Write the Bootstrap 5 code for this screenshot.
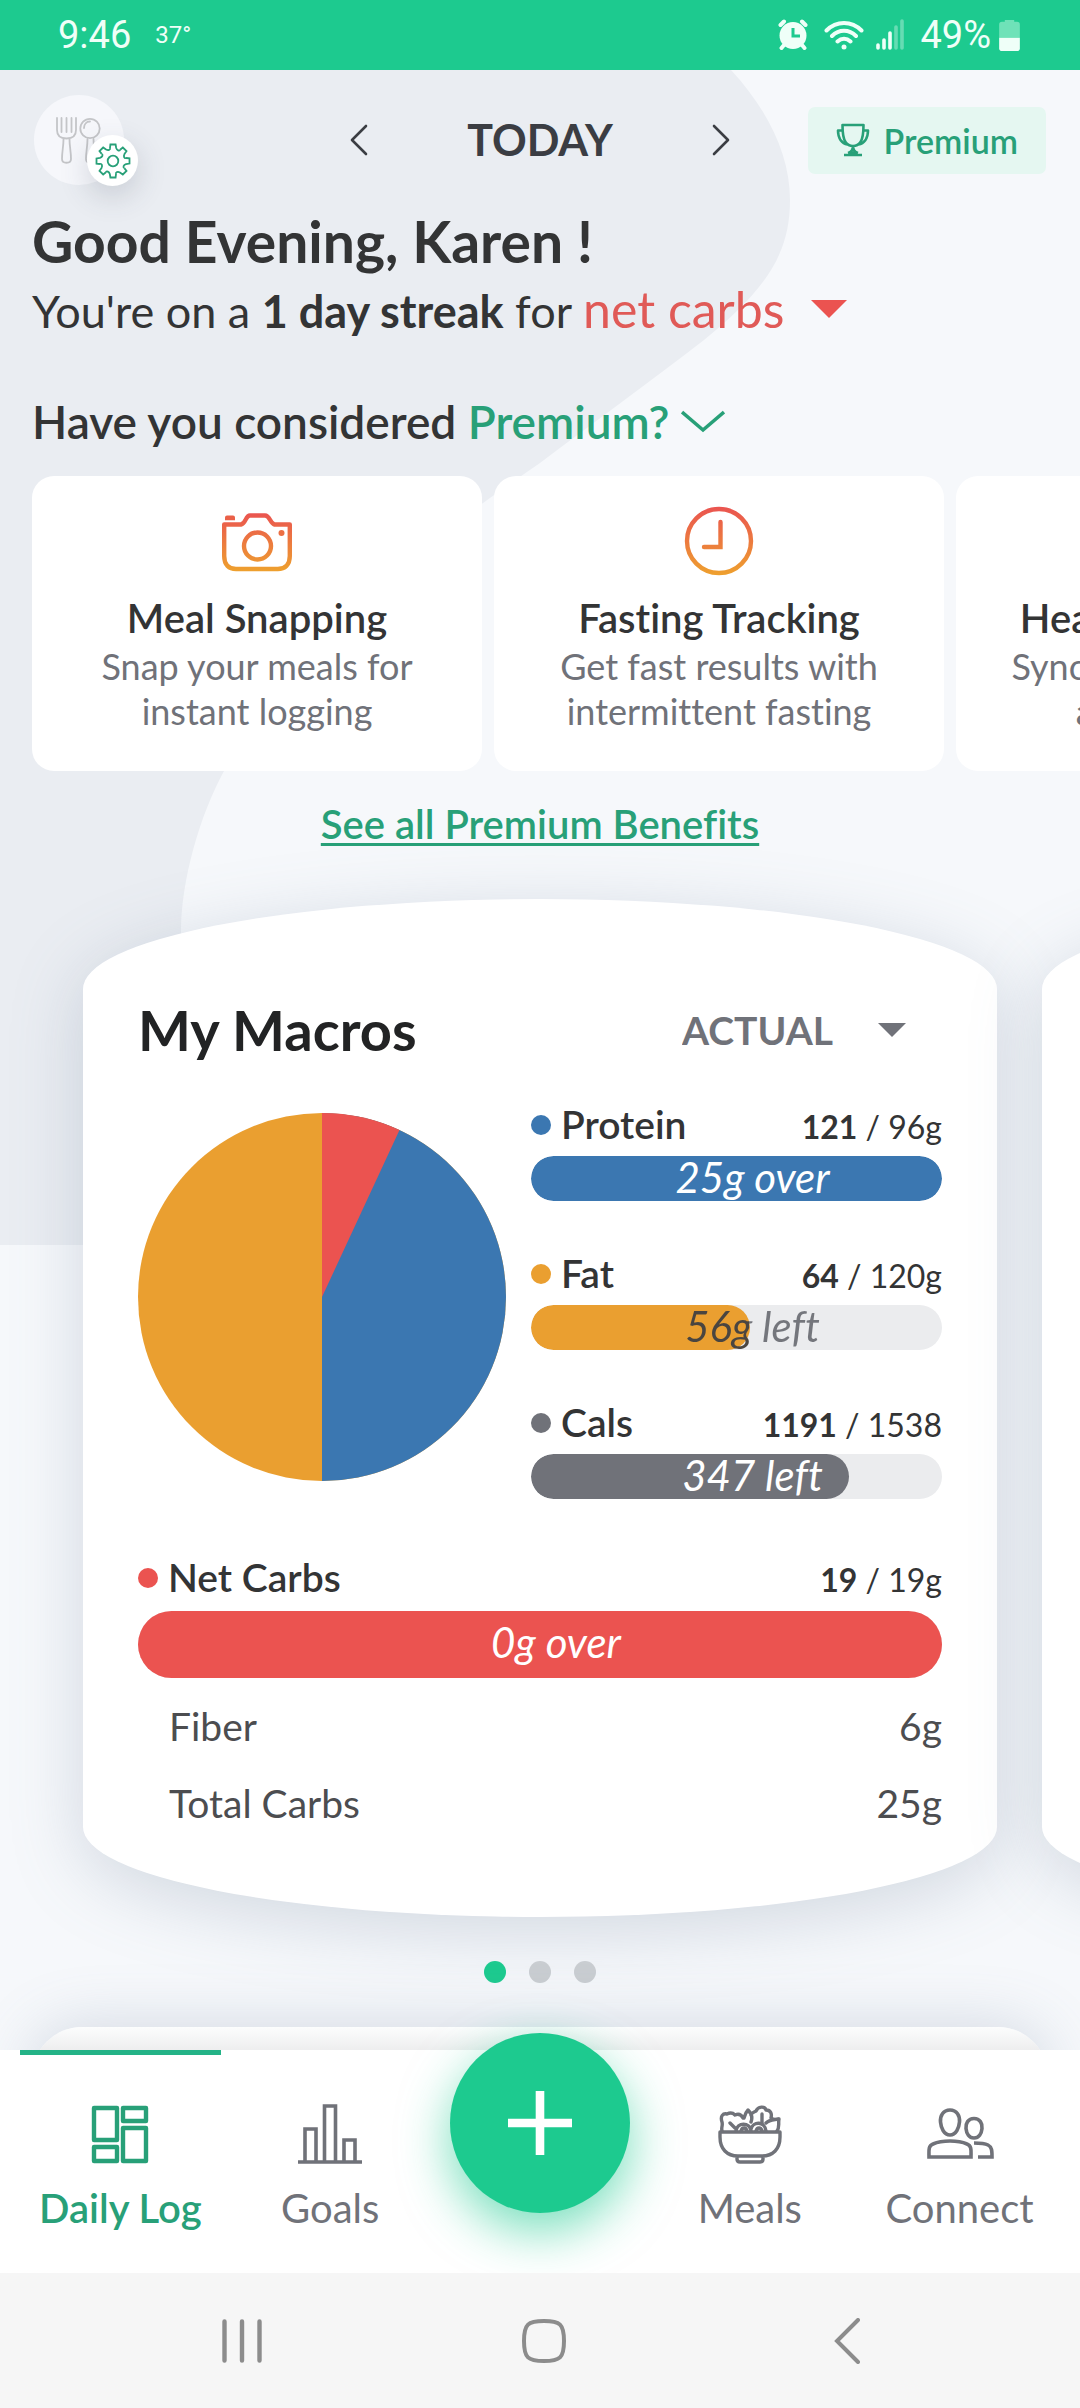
<!doctype html>
<html lang="en">
<head>
<meta charset="utf-8">
<meta name="viewport" content="width=device-width, initial-scale=1">
<title>Daily Log</title>
<link href="https://cdn.jsdelivr.net/npm/bootstrap@5.3.0/dist/css/bootstrap.min.css" rel="stylesheet">
<style>
  :root { --brand: #1dca8f; --brand-dark: #28a078; --ink: #333435; --grey: #707279; }
  body { font-family: Lato, "Open Sans", sans-serif; font-variant-ligatures: none; color: var(--ink); background: #f6f8fb; }
  svg { display: block; flex: none; }
  .text-brand { color: var(--brand-dark); }
  .text-grey { color: var(--grey); }
  .semi { font-weight: 600; }

  /* status bar */
  .status-bar { height: 70px; padding: 0 60px 0 58px; background: var(--brand); color: #effff8; font-family: Roboto, sans-serif; font-size: 38px; line-height: 70px; }
  .status-temp { font-size: 24px; }

  /* backdrop */
  .screen { overflow: hidden; }
  .backdrop { position: absolute; top: 0; left: 0; width: 100%; z-index: -1; }

  /* top row */
  .top-row { padding: 25px 34px 0; }
  .avatar-btn { width: 90px; height: 90px; background: #f6f7fb; border-radius: 50%; }
  .gear-badge { position: absolute; left: 53px; top: 40px; width: 51px; height: 51px; border-radius: 50%; background: #fff; box-shadow: 0 10px 30px rgba(60,70,90,.2); }
  .day-switch { width: 380px; font-size: 43px; line-height: 60px; color: #3b3d43; }
  .premium-btn { height: 67px; padding: 0 28px; gap: 14px; border-radius: 7px; background: #e5f7f1; color: var(--brand-dark); font-size: 34px; font-weight: 600; }

  /* greeting */
  .intro { padding: 24px 32px 0; }
  .hello { font-size: 57px; line-height: 64px; margin: 0 0 6px; font-weight: 700; }
  .streak { font-size: 45px; line-height: 60px; gap: 11px; margin: 0 0 53px; }
  .plain-select { appearance: none; border: 0; padding: 0; background: none; color: inherit; font: inherit; }
  .streak-pick { color: #e05a57; font-size: 50px; gap: 26px; }
  .consider { font-size: 46px; line-height: 56px; margin: 0 0 26px; font-weight: 600; gap: 12px; }

  /* benefits */
  .benefits { padding: 0 32px; gap: 12px; }
  .benefit { flex: 0 0 450px; border-radius: 22px; padding: 29px 10px 37px; text-align: center; background: #fff; font-size: 36px; line-height: 45px; color: var(--grey); white-space: nowrap; }
  .benefit svg { margin: 0 auto 17px; }
  .benefit h2 { font-size: 40px; line-height: 48px; font-weight: 600; color: var(--ink); margin: 0 0 2px; }
  .see-all { font-size: 40px; line-height: 48px; margin: 29px 0 51px; font-weight: 600; text-decoration-thickness: 3px; text-underline-offset: 4px; }
  .see-all:hover { color: var(--brand); }

  /* macro carousel */
  .carousel-track { padding: 0 83px; gap: 45px; }
  .macro-card { flex: 0 0 100%; background: #fff; border-radius: 50% / 90px; padding: 99px 55px 75px; box-shadow: 0 14px 70px rgba(105,125,150,.26); }
  .macro-card h2 { font-size: 56px; line-height: 64px; font-weight: 700; color: #222324; margin: 0; }
  .mode-pick { font-size: 39px; line-height: 48px; font-weight: 700; gap: 44px; padding-right: 36px; }
  .macro-split { margin-top: 41px; gap: 25px; }
  .pie { margin-top: 10px; }
  .macro-list { gap: 51px; }
  .macro-head { height: 44px; font-size: 39px; line-height: 44px; margin-bottom: 9px; }
  .macro-dot { width: 20px; height: 20px; border-radius: 50%; flex: none; margin-right: 10px; }
  .macro-value { font-size: 32px; }
  .meter { height: 45px; border-radius: 23px; background: #ebecee; position: relative; font-size: inherit; }
  .meter .progress-bar { border-radius: 23px; }
  .meter-text { position: absolute; inset: 0; padding-left: 32px; text-align: center; font-size: 42px; line-height: 42px; font-style: italic; color: #fff; }
  .meter-text-split { color: #6f7177; -webkit-text-fill-color: transparent; background: linear-gradient(90deg, #4a4540 53%, #74767c 53%); -webkit-background-clip: text; background-clip: text; }
  .net-block { margin-top: 57px; }
  .net-block .macro-head { margin-bottom: 11px; }
  .net-block .meter { height: 67px; border-radius: 34px; }
  .net-block .meter-text { line-height: 62px; }
  .detail-list { margin: 10px 0 0; padding-left: 31px; font-size: 39px; line-height: 77px; color: #4c4d50; }
  .pager { gap: 23px; margin: 44px 0; }
  .pager button { width: 22px; height: 22px; border-radius: 50%; border: 0; padding: 0; background: #c9cdd1; }
  .pager .active { background: var(--brand); }
  /* the following card slides under the bottom navigation */
  .next-card { margin: 0 32px -60px; min-height: 80px; border-radius: 50px 50px 0 0; background: linear-gradient(#fcfdfd, #ededee 24px); box-shadow: 0 0 60px rgba(105,125,150,.25); }

  /* bottom navigation */
  .tabs { background: #fff; padding: 0 20px; gap: 9px; position: relative; }
  .tab-item { flex: 1 1 0; border-top: 5px solid transparent; padding: 47px 0 41px; color: var(--grey); font-size: 40px; line-height: 48px; text-decoration: none; }
  .tab-item svg { margin: 0 auto 18px; }
  .tab-item.active { border-color: #24b387; color: var(--brand-dark); font-weight: 600; }
  .fab-slot { flex: 1 1 0; }
  .fab { width: 180px; height: 180px; border: 0; border-radius: 50%; background: var(--brand); margin-top: -17px; box-shadow: 0 18px 50px rgba(29,202,143,.6); }
  .system-nav { background: #f6f6f6; height: 135px; padding: 0 82px 0 91px; color: #8c8c8c; position: relative; }
  .system-nav .btn { flex: 1 1 0; color: inherit; }
</style>
</head>
<body class="d-flex flex-column min-vh-100">

<header class="status-bar d-flex justify-content-between">
  <div class="d-flex gap-4"><span>9:46</span><span class="status-temp">37°</span></div>
  <div class="d-flex align-items-center">
    <svg width="30" height="32" viewBox="0 0 30 32" aria-hidden="true"><g fill="none" stroke="#effff8" stroke-width="4" stroke-linecap="round"><path d="M2.500 6 6 2.500M27.500 6 24 2.500M6 26 3.500 29M24 26l2.500 3"/></g><circle cx="15" cy="16.500" r="13.500" fill="#effff8"/><path d="M15 9v8h7" fill="none" stroke="#1dca8f" stroke-width="3"/></svg>
    <svg class="ms-3" width="40" height="30" viewBox="0 0 40 30" fill="none" stroke="#effff8" stroke-width="4" stroke-linecap="round" aria-hidden="true"><path d="M2.500 10.500c10-10 25-10 35 0M8 16c7-7 17-7 24 0M13.500 21.500c4-3.600 9-3.600 13 0"/><circle cx="20" cy="27" r="2.500" fill="#effff8" stroke="none"/></svg>
    <svg class="ms-2 me-3" width="32" height="32" viewBox="0 0 32 32" aria-hidden="true"><g stroke="#effff8" stroke-width="3.600" stroke-linecap="round"><path d="M6 26v3M12 21v8M18 14v15"/><path d="M24 8v21M30 2v27" opacity=".35"/></g></svg>
    <span>49%</span>
    <svg class="ms-2" width="21" height="32" viewBox="0 0 22 34" aria-hidden="true"><path d="M6 3V1h10v2h3a3 3 0 0 1 3 3v14H0V6a3 3 0 0 1 3-3z" fill="#6fe2b8"/><path d="M0 20h22v11a3 3 0 0 1-3 3H3a3 3 0 0 1-3-3z" fill="#effff8"/></svg>
  </div>
</header>

<main class="screen flex-grow-1 d-flex flex-column position-relative z-0">
  <svg class="backdrop" viewBox="0 0 1080 1175" aria-hidden="true"><path fill="#eaedf2" d="M0 0H731C768 40 790 85 790 130 790 185 765 220 704 270 650 312 590 355 540 393 420 475 290 575 224 701 200 745 181 810 181 862V1175H0Z"/></svg>

  <div class="top-row d-flex align-items-center">
    <div class="flex-fill w-25">
      <button type="button" class="avatar-btn btn p-0 position-relative border-0" aria-label="Profile settings">
        <svg width="90" height="90" viewBox="0 0 90 90" fill="none" stroke="#c4c5c8" stroke-width="1.800" stroke-linecap="round" aria-hidden="true">
          <path d="M23 23v12c0 6 4 8.500 9.500 8.500S42 41 42 35V23M27.500 23v14M32.500 23v14M37.500 23v14M29.500 44c0 8-1.500 12-1.500 20 0 5 9 5 9 0 0-8-1.500-12-1.500-20"/>
          <circle cx="56" cy="33.500" r="9.700"/><path d="M50 33c0-4 2.500-6.500 6-6.500M53.500 44c0 8-1.500 12-1.500 20 0 5 9 5 9 0 0-8-1.500-12-1.500-20"/>
        </svg>
        <span class="gear-badge d-flex align-items-center justify-content-center">
          <svg width="36" height="36" viewBox="-18 -18 36 36" fill="none" stroke="#28a078" stroke-width="1.800" aria-hidden="true">
            <defs><path id="tooth" d="M-3-13-2.600-16.500H2.600L3.200-13C4-10.500 6.200-9.700 7.070-11.300"/></defs>
            <use href="#tooth"/><use href="#tooth" transform="rotate(45)"/><use href="#tooth" transform="rotate(90)"/><use href="#tooth" transform="rotate(135)"/><use href="#tooth" transform="rotate(180)"/><use href="#tooth" transform="rotate(225)"/><use href="#tooth" transform="rotate(270)"/><use href="#tooth" transform="rotate(315)"/>
            <circle r="5.300"/>
          </svg>
        </span>
      </button>
    </div>
    <div class="day-switch d-flex align-items-center justify-content-between fw-bold">
      <button type="button" class="btn border-0 p-0" aria-label="Previous day"><svg width="18" height="32" viewBox="0 0 18 32" fill="none" stroke="#3b3d43" stroke-width="2.600" stroke-linecap="round" stroke-linejoin="round"><path d="M16 2 2 16l14 14"/></svg></button>
      <span>TODAY</span>
      <button type="button" class="btn border-0 p-0" aria-label="Next day"><svg width="18" height="32" viewBox="0 0 18 32" fill="none" stroke="#3b3d43" stroke-width="2.600" stroke-linecap="round" stroke-linejoin="round"><path d="m2 2 14 14L2 30"/></svg></button>
    </div>
    <div class="flex-fill w-25 d-flex justify-content-end">
      <button type="button" class="premium-btn btn d-flex align-items-center border-0">
        <svg width="34" height="34" viewBox="0 0 34 34" fill="none" stroke="#28a078" stroke-width="2.600" stroke-linejoin="round" aria-hidden="true"><path d="M6.500 2h21c0 9-1 14-3 17-2 3-4.500 4-7.500 4s-5.500-1-7.500-4c-2-3-3-8-3-17zM6.500 7.500H2c0 8 4 13 9.500 14M27.500 7.500H32c0 8-4 13-9.500 14M17 23c0 4-2 6-5 7M17 23c0 4 2 6 5 7M8 32h18M12.500 29.500h9"/></svg>
        Premium
      </button>
    </div>
  </div>

  <section class="intro">
    <h1 class="hello">Good Evening, Karen !</h1>
    <div class="streak d-flex align-items-baseline">
      <label for="streakMacro">You're on a <strong>1 day streak</strong> for</label>
      <span class="streak-pick d-flex align-items-center">
        <select id="streakMacro" class="plain-select"><option>net carbs</option><option>protein</option><option>fat</option></select>
        <svg width="36" height="18" viewBox="0 0 36 18" aria-hidden="true"><path d="M0 0h36L18 18z" fill="#eb5350"/></svg>
      </span>
    </div>
    <p class="consider d-flex align-items-center">
      <span>Have you considered <a href="#benefits" class="text-decoration-none text-brand">Premium?</a></span>
      <svg width="44" height="24" viewBox="0 0 44 24" fill="none" stroke="#28a078" stroke-width="3.600" aria-hidden="true"><path d="m1 2 21 18L43 2"/></svg>
    </p>
  </section>

  <section id="benefits" class="benefits d-flex">
    <article class="benefit">
      <svg width="72" height="72" viewBox="0 0 72 72" fill="none" aria-hidden="true">
        <defs><linearGradient id="warmA" gradientUnits="userSpaceOnUse" x1="0" y1="8" x2="0" y2="66"><stop offset="0" stop-color="#ea5450"/><stop offset="1" stop-color="#eea02e"/></linearGradient></defs>
        <g stroke="url(#warmA)" stroke-width="4.400" stroke-linejoin="round"><path d="M3.200 19.500H20c5-1 4.500-9 9-9h15c5 0 5 8 9.500 9h15.300V51c0 9-5 13-12 13H15C8 64 3.200 60 3.200 51z"/><circle cx="36.500" cy="41" r="13.500"/></g>
        <path d="M4 12.500a2 2 0 0 1 2-2h6a2 2 0 0 1 2 2v2.700H4z" fill="#ea6048"/><circle cx="60.500" cy="28" r="3" fill="#ec6f44"/>
      </svg>
      <h2>Meal Snapping</h2>Snap your meals for<br>instant logging
    </article>
    <article class="benefit">
      <svg width="72" height="72" viewBox="0 0 72 72" fill="none" stroke="url(#warmB)" stroke-width="4.400" stroke-linecap="round" aria-hidden="true">
        <defs><linearGradient id="warmB" gradientUnits="userSpaceOnUse" x1="0" y1="2" x2="0" y2="70"><stop offset="0" stop-color="#ea5450"/><stop offset="1" stop-color="#eea02e"/></linearGradient></defs>
        <circle cx="36" cy="36" r="32"/><path d="M37.500 17v25H21"/>
      </svg>
      <h2>Fasting Tracking</h2>Get fast results with<br>intermittent fasting
    </article>
    <article class="benefit">
      <svg width="72" height="72" viewBox="0 0 72 72" fill="none" stroke="#ea5450" stroke-width="4.400" stroke-linejoin="round" aria-hidden="true"><path d="M36 62C-4 34 12 10 26 12c6 1 10 8 10 8s4-7 10-8c14-2 30 22-10 50z"/></svg>
      <h2>Health Integration</h2>Sync your health data<br>automatically
    </article>
  </section>

  <a href="#premium" class="see-all text-brand align-self-center">See all Premium Benefits</a>

  <section class="carousel-track d-flex">
    <article class="macro-card">
      <div class="d-flex align-items-center justify-content-between">
        <h2>My Macros</h2>
        <div class="mode-pick d-flex align-items-center text-grey">
          <select class="plain-select" aria-label="Display mode"><option>ACTUAL</option><option>GOAL</option></select>
          <svg width="28" height="14" viewBox="0 0 28 14" aria-hidden="true"><path d="M0 0h28L14 14z" fill="#707279"/></svg>
        </div>
      </div>

      <div class="macro-split d-flex align-items-start">
        <svg class="pie" width="368" height="368" viewBox="-184 -184 368 368" role="img" aria-label="Macro split">
          <circle r="184" fill="#ea9f30"/><path d="M0-184A184 184 0 0 1 0 184Z" fill="#3b77b1"/><path d="M0 0V-184A184 184 0 0 1 77.500-167Z" fill="#eb5350"/>
        </svg>
        <div class="macro-list flex-grow-1 d-flex flex-column">
          <div>
            <div class="macro-head d-flex align-items-center"><span class="macro-dot" style="background:#3b77b1"></span><div class="flex-grow-1 d-flex justify-content-between align-items-baseline"><span class="semi">Protein</span><span class="macro-value"><b>121</b> / 96g</span></div></div>
            <div class="progress meter"><div class="progress-bar" style="width:100%;background:#3b77b1"></div><span class="meter-text">25g over</span></div>
          </div>
          <div>
            <div class="macro-head d-flex align-items-center"><span class="macro-dot" style="background:#ea9f30"></span><div class="flex-grow-1 d-flex justify-content-between align-items-baseline"><span class="semi">Fat</span><span class="macro-value"><b>64</b> / 120g</span></div></div>
            <div class="progress meter"><div class="progress-bar" style="width:53.3%;background:#ea9f30"></div><span class="meter-text meter-text-split">56g left</span></div>
          </div>
          <div>
            <div class="macro-head d-flex align-items-center"><span class="macro-dot" style="background:#707279"></span><div class="flex-grow-1 d-flex justify-content-between align-items-baseline"><span class="semi">Cals</span><span class="macro-value"><b>1191</b> / 1538</span></div></div>
            <div class="progress meter"><div class="progress-bar" style="width:77.4%;background:#707279"></div><span class="meter-text">347 left</span></div>
          </div>
        </div>
      </div>

      <div class="net-block">
        <div class="macro-head d-flex align-items-center"><span class="macro-dot" style="background:#eb5350"></span><div class="flex-grow-1 d-flex justify-content-between align-items-baseline"><span class="semi">Net Carbs</span><span class="macro-value"><b>19</b> / 19g</span></div></div>
        <div class="progress meter"><div class="progress-bar" style="width:100%;background:#eb5350"></div><span class="meter-text">0g over</span></div>
      </div>
      <div class="detail-list">
        <div class="d-flex justify-content-between"><span>Fiber</span><span>6g</span></div>
        <div class="d-flex justify-content-between"><span>Total Carbs</span><span>25g</span></div>
      </div>
    </article>
    <article class="macro-card" aria-hidden="true"></article>
  </section>

  <div class="pager d-flex justify-content-center">
    <button type="button" class="active" aria-label="Slide 1"></button><button type="button" aria-label="Slide 2"></button><button type="button" aria-label="Slide 3"></button>
  </div>
  <div class="next-card flex-grow-1"></div>
</main>

<nav class="tabs d-flex text-center">
  <a href="#log" class="tab-item active" aria-current="page">
    <svg width="64" height="64" viewBox="0 0 64 64" fill="none" stroke="currentColor" stroke-width="4.400" stroke-linejoin="round" aria-hidden="true"><path d="M6 6h23v32H6zM35 6h23v13H35zM6 45h23v14H6zM35 26h23v33H35z"/></svg>Daily Log</a>
  <a href="#goals" class="tab-item">
    <svg width="64" height="64" viewBox="0 0 64 64" fill="none" stroke="currentColor" stroke-width="3.600" aria-hidden="true"><path d="M0 60h64M7 60V27h11v33M26.500 60V4h11v56M46 60V38h11v22"/></svg>Goals</a>
  <div class="fab-slot d-flex justify-content-center align-items-start">
    <button type="button" class="fab d-flex align-items-center justify-content-center" aria-label="Add entry"><svg width="64" height="64" viewBox="0 0 64 64" stroke="#fff" stroke-width="8.600" aria-hidden="true"><path d="M32 0v64M0 32h64"/></svg></button>
  </div>
  <a href="#meals" class="tab-item">
    <svg width="64" height="64" viewBox="0 0 64 64" fill="none" stroke="currentColor" stroke-width="3.400" stroke-linejoin="round" stroke-linecap="round" aria-hidden="true"><path d="M2 30h60v5c0 12-7 19-18 19H20C9 54 2 47 2 35zM19 54v3c0 2 1 3 3 3h20c2 0 3-1 3-3v-3"/><path d="M4 29c-1-4 1-5 0-9-2-6 1-9 5-8 4-2 6-1 8 1 5-2 7 1 8 3M12 21l5 5M26 16c1-4 2-6 4-8 3 3 5 7 3 12M33 13c1-3 4-3 5-4 2-5 9-5 10-1 5 0 6 4 5 8 4 2 3 2 8 1-1 4 1 8-2 12M44 12v9M48 21c3-3 7-3 12-4"/><path d="M18 29c1-9 14-9 15 0M33 27c2-8 14-8 15 2M23 29c1-4 5-4 6 0M38 29c1-4 5-4 6 0"/></svg>Meals</a>
  <a href="#connect" class="tab-item">
    <svg width="68" height="64" viewBox="0 0 68 64" fill="none" stroke="currentColor" stroke-width="3.600" aria-hidden="true"><path d="M24 8c7 0 10 6 9.500 12S30 33 24 33s-9-7-9.500-13S17 8 24 8zM48 16.500c6 0 8.500 5 8 10S53 36 48 36s-7.500-4.500-8-9.500 2-10 8-10zM3 55c0-6-1-11 4-13 9-4 25-4 34 0 5 2 4 7 4 13zM48 41c6 0 10 0 14 2 4 2 4 6 4 12H52"/></svg>Connect</a>
</nav>

<footer class="system-nav d-flex align-items-center">
  <button type="button" class="btn border-0 p-0" aria-label="Recent apps"><svg class="mx-auto" width="40" height="44" viewBox="0 0 40 44" stroke="currentColor" stroke-width="4.400" stroke-linecap="round"><path d="M2.500 2.500v39M20 2.500v39M37.500 2.500v39"/></svg></button>
  <button type="button" class="btn border-0 p-0" aria-label="Home"><svg class="mx-auto" width="46" height="46" viewBox="0 0 46 46" fill="none" stroke="currentColor" stroke-width="4"><path d="M23 3c16 0 20 3 20 20s-4 20-20 20S3 40 3 23 7 3 23 3z"/></svg></button>
  <button type="button" class="btn border-0 p-0" aria-label="Back"><svg class="mx-auto" width="26" height="46" viewBox="0 0 26 46" fill="none" stroke="currentColor" stroke-width="4" stroke-linecap="round"><path d="M24 2 3 23l21 21"/></svg></button>
</footer>

<script src="https://cdn.jsdelivr.net/npm/bootstrap@5.3.0/dist/js/bootstrap.bundle.min.js"></script>
</body>
</html>
